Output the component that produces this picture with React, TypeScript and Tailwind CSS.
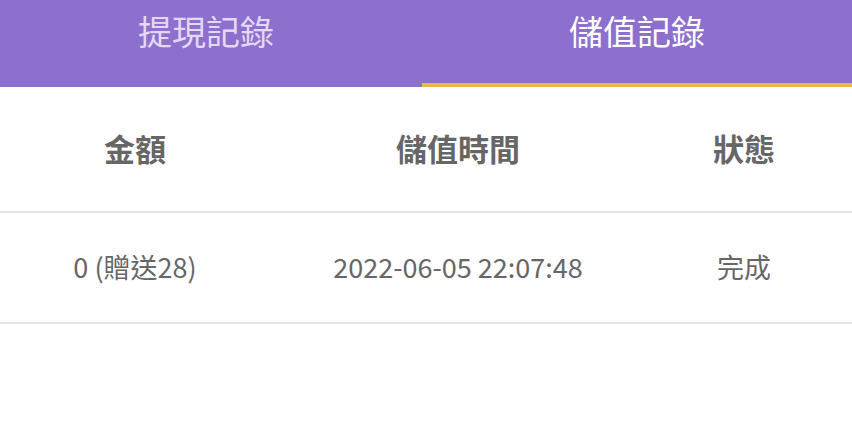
const font = { fontFamily: '"Noto Sans CJK TC", "Noto Sans", sans-serif' };

type Record = {
  amount: string;
  time: string;
  status: string;
};

const records: Record[] = [{ amount: '0 (贈送28)', time: '2022-06-05 22:07:48', status: '完成' }];

export default function App() {
  return (
    <div className="h-[438px] w-[852px] bg-white" style={font}>
      <div className="flex h-[87px] bg-[#8d6fce]">
        <button type="button" className="flex w-[412px] items-start justify-center pt-[7px] text-[34px] leading-[48px] text-[#e3d9f6]">
          提現記錄
        </button>
        <button
          type="button"
          className="ml-[10px] flex flex-1 items-start justify-center border-b-[4px] border-[#e8b94a] pt-[7px] text-[34px] leading-[48px] text-white"
        >
          儲值記錄
        </button>
      </div>

      <div className="flex h-[126px] items-center border-b-2 border-[#e3e3e3] pb-[2px] text-[31px] font-bold text-[#666666]">
        <div className="w-[270px] text-center">金額</div>
        <div className="w-[376px] text-center">儲值時間</div>
        <div className="w-[196px] text-center">狀態</div>
      </div>

      {records.map((r) => (
        <div
          key={r.time}
          className="flex h-[111px] items-center border-b-2 border-[#e3e3e3] text-[27px] text-[#666666]"
        >
          <div className="w-[270px] text-center">{r.amount}</div>
          <div className="w-[376px] text-center">{r.time}</div>
          <div className="w-[196px] text-center">{r.status}</div>
        </div>
      ))}
    </div>
  );
}
